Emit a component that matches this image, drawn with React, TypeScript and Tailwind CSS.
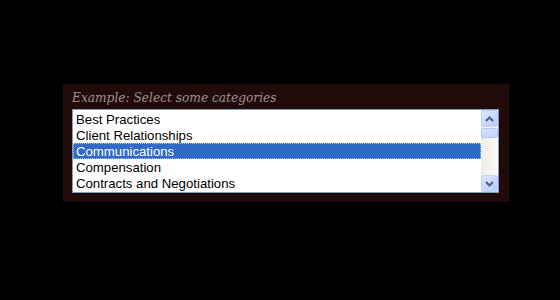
import React from "react";

const items = [
  "Best Practices",
  "Client Relationships",
  "Communications",
  "Compensation",
  "Contracts and Negotiations",
];

export default function App() {
  return (
    <div className="w-[560px] h-[300px] bg-black pt-[84px] pl-[63px]">
      <div className="w-[446px] h-[118px] bg-[#210a0a] pl-[9px] pt-[6px]">
        <div
          className="h-[16px] leading-[16px] text-[12.2px] italic text-[#9c9292]"
          style={{ fontFamily: '"DejaVu Serif", serif' }}
        >
          Example: Select some categories
        </div>
        <div className="mt-[3px] w-[427px] h-[84px] border border-[#7f9db9] bg-white flex">
          <div className="flex-1 py-[1px]" style={{ fontFamily: '"Liberation Sans", Arial, sans-serif' }}>
            {items.map((it, i) => (
              <div
                key={it}
                className={
                  i === 2
                    ? "h-[16px] leading-[16px] text-[13.2px] pl-[2px] bg-[#316ac5] text-white border border-dotted border-[#a8c0ea]"
                    : "h-[16px] leading-[18px] text-[13.2px] pl-[3px] text-black"
                }
              >
                {it}
              </div>
            ))}
          </div>
          <div className="w-[17px] h-full flex flex-col bg-gradient-to-r from-[#eeede5] to-[#fbfbf8]">
            <div className="h-[17px] rounded-[2px] border border-[#c3d3fd] bg-gradient-to-br from-[#dce6fe] to-[#b9cbf8] flex items-center justify-center">
              <svg width="9" height="6" viewBox="0 0 9 6">
                <path d="M1 5 L4.5 1.5 L8 5" stroke="#4d6185" strokeWidth="2" fill="none" />
              </svg>
            </div>
            <div className="h-[10px] mt-[1px] rounded-[2px] border border-[#b6c8f4] bg-gradient-to-br from-[#d6e2fe] to-[#c0d2fb]" />
            <div className="flex-1" />
            <div className="h-[17px] rounded-[2px] border border-[#c3d3fd] bg-gradient-to-br from-[#dce6fe] to-[#b9cbf8] flex items-center justify-center">
              <svg width="9" height="6" viewBox="0 0 9 6">
                <path d="M1 1 L4.5 4.5 L8 1" stroke="#4d6185" strokeWidth="2" fill="none" />
              </svg>
            </div>
          </div>
        </div>
      </div>
    </div>
  );
}
